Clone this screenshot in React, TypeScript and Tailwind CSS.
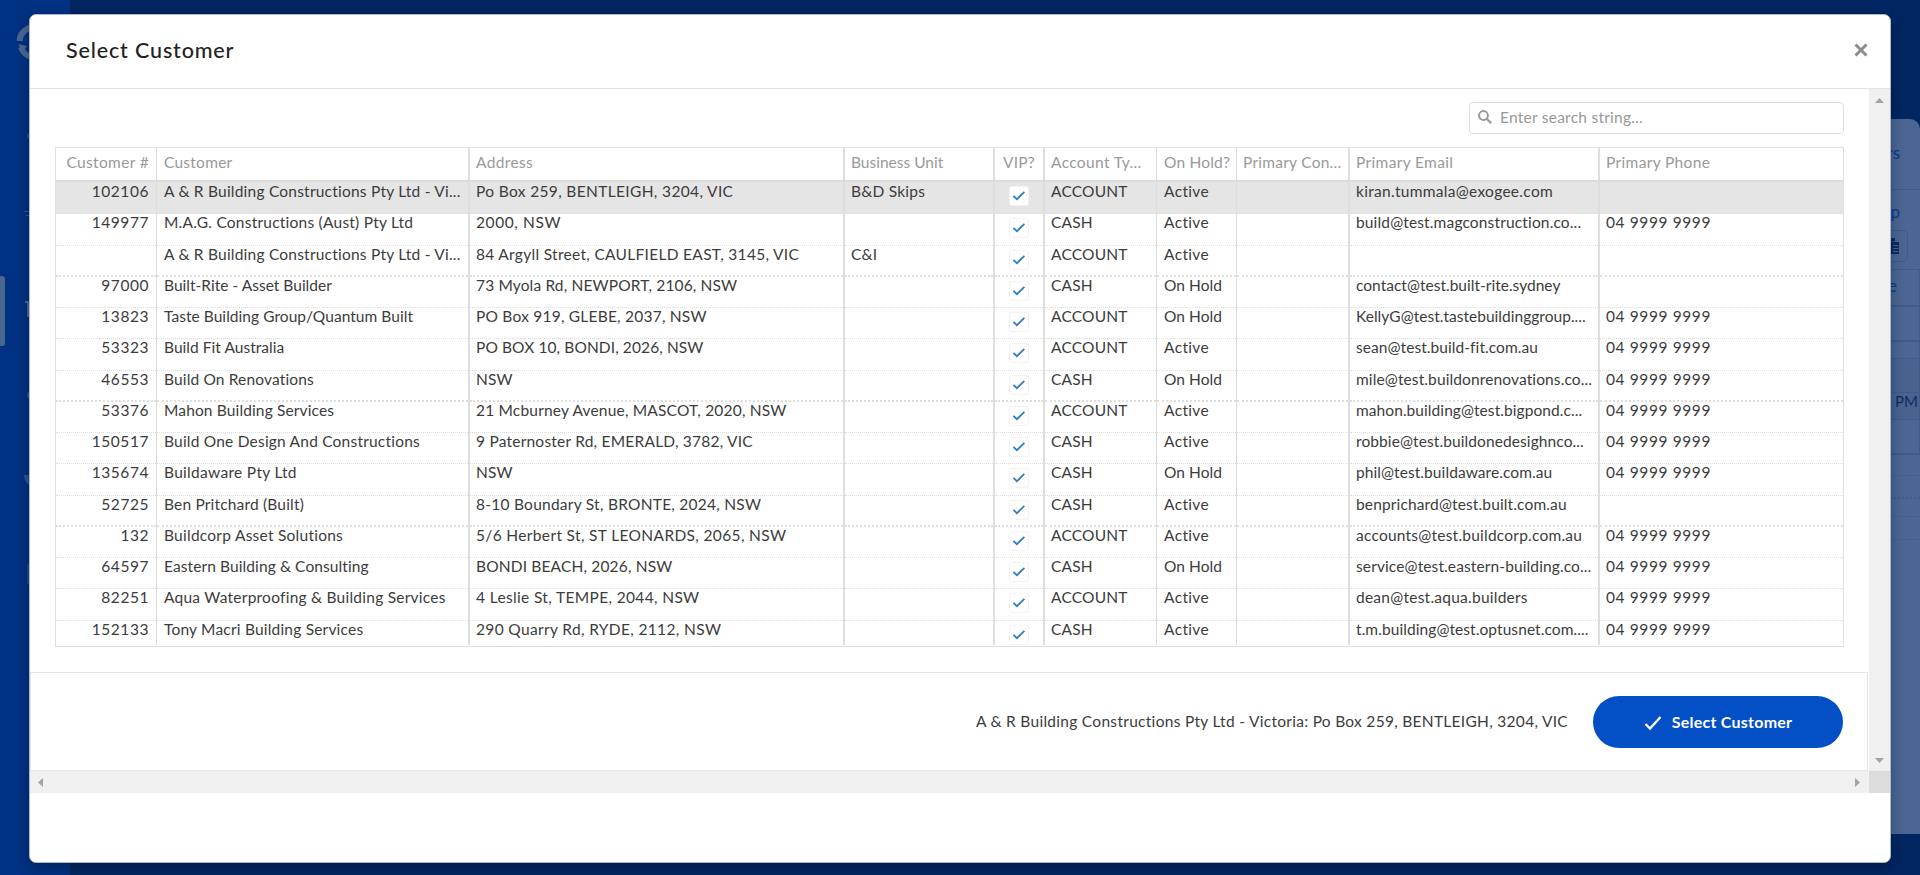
import React from "react";

type Row = {
  id: string;
  name: string;
  address: string;
  unit?: string;
  type: "ACCOUNT" | "CASH";
  hold: "Active" | "On Hold";
  email?: string;
  phone?: string;
  // letter spacing of the name, address and email cells
  spacing: [string, string, string];
};

const PHONE = "04 9999 9999";

const rows: Row[] = [
  { id: "102106", name: "A & R Building Constructions Pty Ltd - Vi...", address: "Po Box 259, BENTLEIGH, 3204, VIC", unit: "B&D Skips", type: "ACCOUNT", hold: "Active", email: "kiran.tummala@exogee.com", spacing: ["tracking-[0.22px]", "tracking-[0.35px]", "tracking-[0.3px]"] },
  { id: "149977", name: "M.A.G. Constructions (Aust) Pty Ltd", address: "2000, NSW", type: "CASH", hold: "Active", email: "build@test.magconstruction.co...", phone: PHONE, spacing: ["tracking-[0.23px]", "tracking-[0.6px]", "tracking-[0.15px]"] },
  { id: "", name: "A & R Building Constructions Pty Ltd - Vi...", address: "84 Argyll Street, CAULFIELD EAST, 3145, VIC", unit: "C&I", type: "ACCOUNT", hold: "Active", spacing: ["tracking-[0.22px]", "tracking-[0.3px]", "tracking-[0px]"] },
  { id: "97000", name: "Built-Rite - Asset Builder", address: "73 Myola Rd, NEWPORT, 2106, NSW", type: "CASH", hold: "On Hold", email: "contact@test.built-rite.sydney", spacing: ["tracking-[0.02px]", "tracking-[0.15px]", "tracking-[0.02px]"] },
  { id: "13823", name: "Taste Building Group/Quantum Built", address: "PO Box 919, GLEBE, 2037, NSW", type: "ACCOUNT", hold: "On Hold", email: "KellyG@test.tastebuildinggroup....", phone: PHONE, spacing: ["tracking-[0.05px]", "tracking-[0.22px]", "tracking-[0.03px]"] },
  { id: "53323", name: "Build Fit Australia", address: "PO BOX 10, BONDI, 2026, NSW", type: "ACCOUNT", hold: "Active", email: "sean@test.build-fit.com.au", phone: PHONE, spacing: ["tracking-[0.04px]", "tracking-[0.1px]", "tracking-[0.07px]"] },
  { id: "46553", name: "Build On Renovations", address: "NSW", type: "CASH", hold: "On Hold", email: "mile@test.buildonrenovations.co...", phone: PHONE, spacing: ["tracking-[0.15px]", "tracking-[0.1px]", "tracking-[0.12px]"] },
  { id: "53376", name: "Mahon Building Services", address: "21 Mcburney Avenue, MASCOT, 2020, NSW", type: "ACCOUNT", hold: "Active", email: "mahon.building@test.bigpond.c...", phone: PHONE, spacing: ["tracking-[0.14px]", "tracking-[0.19px]", "tracking-[0.07px]"] },
  { id: "150517", name: "Build One Design And Constructions", address: "9 Paternoster Rd, EMERALD, 3782, VIC", type: "CASH", hold: "Active", email: "robbie@test.buildonedesighnco...", phone: PHONE, spacing: ["tracking-[0.21px]", "tracking-[0.22px]", "tracking-[0.1px]"] },
  { id: "135674", name: "Buildaware Pty Ltd", address: "NSW", type: "CASH", hold: "On Hold", email: "phil@test.buildaware.com.au", phone: PHONE, spacing: ["tracking-[0.3px]", "tracking-[0.1px]", "tracking-[0.08px]"] },
  { id: "52725", name: "Ben Pritchard (Built)", address: "8-10 Boundary St, BRONTE, 2024, NSW", type: "CASH", hold: "Active", email: "benprichard@test.built.com.au", spacing: ["tracking-[0.18px]", "tracking-[0.25px]", "tracking-[0.14px]"] },
  { id: "132", name: "Buildcorp Asset Solutions", address: "5/6 Herbert St, ST LEONARDS, 2065, NSW", type: "ACCOUNT", hold: "Active", email: "accounts@test.buildcorp.com.au", phone: PHONE, spacing: ["tracking-[0.25px]", "tracking-[0.35px]", "tracking-[0.23px]"] },
  { id: "64597", name: "Eastern Building & Consulting", address: "BONDI BEACH, 2026, NSW", type: "CASH", hold: "On Hold", email: "service@test.eastern-building.co...", phone: PHONE, spacing: ["tracking-[0.1px]", "tracking-[0.16px]", "tracking-[0.12px]"] },
  { id: "82251", name: "Aqua Waterproofing & Building Services", address: "4 Leslie St, TEMPE, 2044, NSW", type: "ACCOUNT", hold: "Active", email: "dean@test.aqua.builders", phone: PHONE, spacing: ["tracking-[0.24px]", "tracking-[0.35px]", "tracking-[0.25px]"] },
  { id: "152133", name: "Tony Macri Building Services", address: "290 Quarry Rd, RYDE, 2112, NSW", type: "CASH", hold: "Active", email: "t.m.building@test.optusnet.com....", phone: PHONE, spacing: ["tracking-[0.2px]", "tracking-[0.35px]", "tracking-[0.08px]"] },
];

const GRID = "grid grid-cols-[101px_313px_375px_150px_50px_112px_80px_113px_250px_243px]";

const columns = [
  { label: "Customer #", border: "border-r", align: "justify-end pr-[7px]", head: "tracking-[0.35px]" },
  { label: "Customer", border: "border-r-2", align: "pl-[7px]", head: "tracking-[0.25px]" },
  { label: "Address", border: "border-r-2", align: "pl-[6px]", head: "tracking-[0.35px]" },
  { label: "Business Unit", border: "border-r-2", align: "pl-[6px]", head: "tracking-[0px]" },
  { label: "VIP?", border: "border-r-2", align: "justify-center", head: "tracking-[0.2px]" },
  { label: "Account Ty...", border: "border-r", align: "pl-[6px]", head: "tracking-[0.35px]" },
  { label: "On Hold?", border: "border-r", align: "pl-[7px]", head: "tracking-[0.2px]" },
  { label: "Primary Con...", border: "border-r-2", align: "pl-[6px]", head: "tracking-[0.25px]" },
  { label: "Primary Email", border: "border-r-2", align: "pl-[6px]", head: "tracking-[0.35px]" },
  { label: "Primary Phone", border: "", align: "pl-[6px]", head: "tracking-[0.35px]" },
];

function VipCheck() {
  return (
    <span className="mt-[4px] flex h-5 w-5 items-center justify-center rounded-[3px] border border-[#f3f3f3] bg-white">
      <svg width="14" height="12" viewBox="0 0 14 12" fill="none">
        <path d="M1.4 5.8 L4.9 9.2 L12.4 1.8" stroke="#2f7ac3" strokeWidth="1.7" />
      </svg>
    </span>
  );
}

function TableRow({ row, index }: { row: Row; index: number }) {
  const selected = index === 0;
  const strong = index % 4 === 2 && index < 12;
  const cells: [React.ReactNode, string][] = [
    [row.id, "tracking-[0.55px]"],
    [row.name, row.spacing[0]],
    [row.address, row.spacing[1]],
    [row.unit, "tracking-[0.22px]"],
    [<VipCheck key="vip" />, ""],
    [row.type, "tracking-[0.2px]"],
    [row.hold, row.hold === "Active" ? "tracking-[0.35px]" : "tracking-[0.05px]"],
    ["", ""],
    [row.email, row.spacing[2]],
    [row.phone, "tracking-[0.6px]"],
  ];
  return (
    <div className={`${GRID} shrink-0 ${selected ? "h-[32.25px] bg-[#e5e5e5] leading-[18px]" : "h-[31.25px] leading-[16px]"}`}>
      {cells.map(([value, spacing], i) => (
        <div key={i} className={`flex min-w-0 items-stretch border-[#dedede] ${columns[i].border}`}>
          <div
            className={`flex w-full items-start border-dotted border-[#dedede] whitespace-nowrap ${
              strong ? "border-b-2" : "border-b"
            } ${columns[i].align} ${spacing}`}
          >
            {value}
          </div>
        </div>
      ))}
    </div>
  );
}

function Backdrop() {
  return (
    <div className="flex h-[875px] w-[1920px] bg-[#002662]">
      <div className="relative w-[70px] bg-[#003182]">
        <svg className="absolute left-[16px] top-[24px]" width="36" height="36" viewBox="0 0 36 36" fill="none">
          <path d="M3.5 17 A15 15 0 0 1 18 3" stroke="#4b6794" strokeWidth="6" />
          <path d="M5 23 A14 14 0 0 0 18 33" stroke="#4b6794" strokeWidth="6" />
          <path d="M2 20 L11 22 L7 28 Z" fill="#4b6794" />
        </svg>
        <div className="absolute left-0 top-[276px] h-[70px] w-[5px] rounded-r-[3px] bg-[#4b6794]" />
        <div className="absolute left-[27px] top-[133px] h-[6px] w-5 rounded-l-full bg-[#2e5391]" />
        <div className="absolute left-[24px] top-[211px] h-px w-5 bg-[#2e5391]" />
        <div className="absolute left-[26px] top-[215px] h-px w-5 bg-[#2e5391]" />
        <div className="absolute left-[25px] top-[301px] h-[2px] w-5 bg-[#4b6794]" />
        <div className="absolute left-[27px] top-[302px] h-[15px] w-5 bg-[#4b6794]" />
        <div className="absolute left-[27px] top-[390px] h-[10px] w-5 rounded-full bg-[#2e5391]" />
        <div className="absolute left-[24px] top-[475px] h-[12px] w-5 rounded-bl-full bg-[#2e5391]" />
        <div className="absolute left-[27px] top-[563px] h-[22px] w-5 rounded-[3px] bg-[#1f488c]" />
      </div>
      <div className="relative mt-[119px] ml-5 h-[715px] w-[1830px] rounded-tr-[10px] bg-[#4b6692] text-[17px] text-[#063c96]">
        <div className="h-[71px] border-b border-[#3f5b8a] pt-[23px] pr-[20px] text-right leading-[22px]">Customers</div>
        <div className="h-[80px] border-b border-[#3f5b8a] pt-[11px] pr-[20px] text-right leading-[22px]">
          Map
          <div className="absolute top-[111px] right-[12px] flex h-8 w-10 items-center justify-end rounded-[5px] border border-[#3f5b8a] pr-[7px]">
            <svg width="16" height="16" viewBox="0 0 16 16">
              <path d="M0 0h11v3.5H8V12H0z" fill="#0b2d62" />
              <path d="M7 4h8v12H7z" fill="#0b2d62" />
              <path d="M9 7.5h5.5M9 10.5h5.5M9 13.5h5.5" stroke="#4b6692" strokeWidth="1" />
            </svg>
          </div>
        </div>
        <div className="border-r border-[#3f5b8a]">
          <div className="h-[37px] border-b-2 border-[#3f5b8a] pt-[5px] pr-[22px] text-right leading-[22px]">Date</div>
          <div className="h-[35px] border-b-2 border-[#3f5b8a]" />
          <div className="h-[17px] border-b border-[#3f5b8a]" />
          <div className="h-[34px] border-b border-[#3f5b8a] bg-[#49638f]" />
          <div className="h-[27px] border-b border-[#3f5b8a] bg-[#49638f] pr-[1px] text-right text-[15px] leading-[17px] text-[#0b2d62]">PM</div>
          <div className="h-[35px] border-b-2 border-[#3f5b8a]" />
        </div>
        <div className="h-[21px] border-b border-dotted border-[#3f5b8a]" />
        <div className="h-[23px] border-b-2 border-dotted border-[#3f5b8a]" />
        <div className="h-[18px] border-b border-dotted border-[#3f5b8a]" />
        <div className="h-[23px] border-b border-dotted border-[#3f5b8a]" />
      </div>
    </div>
  );
}

export default function App() {
  return (
    <div className="relative h-[875px] w-[1920px] overflow-hidden font-['Lato','Noto_Sans',sans-serif] text-[15.5px] text-[#3c3c3c]">
      <Backdrop />

      <div className="absolute top-[14px] left-[29px] flex h-[849px] w-[1862px] flex-col overflow-hidden rounded-[7px] border border-[#aeb8ca] bg-white shadow-[0_4px_14px_rgba(0,0,0,0.3)]">
        <header className="flex h-[74px] shrink-0 items-center justify-between border-b border-[#e2e2e2] pr-[22px] pl-[36px]">
          <h1 className="mb-[3px] text-[21.5px] font-medium tracking-[0.85px] text-[#222]">Select Customer</h1>
          <svg className="mb-[3px]" width="14" height="14" viewBox="0 0 14 14">
            <path d="M1.5 1.5 L12.5 12.5 M12.5 1.5 L1.5 12.5" stroke="#8c8c8c" strokeWidth="3" />
          </svg>
        </header>

        <div className="flex h-[682px] shrink-0">
          <div className="flex w-[1839px] flex-col">
            <div className="flex h-[583px] flex-col pt-[13px] pr-[25px] pl-[25px]">
              <div className="mb-[13px] flex h-8 w-[375px] shrink-0 items-center gap-[8px] self-end rounded-[4px] border border-[#dedede] pb-[1px] pl-[8px] tracking-[0.25px] text-[#999]">
                <svg className="mt-[-2px]" width="14" height="14" viewBox="0 0 14 14" fill="none">
                  <circle cx="5.5" cy="5.5" r="4.4" stroke="#999" strokeWidth="2" />
                  <path d="M8.7 8.7 L13.2 13.2" stroke="#999" strokeWidth="2.2" />
                </svg>
                Enter search string...
              </div>

              <div className="flex h-[500px] w-[1789px] shrink-0 flex-col overflow-hidden border border-[#e0e0e0]">
                <div className={`${GRID} h-[34px] shrink-0 border-b-2 border-[#dcdcdc] text-[#999]`}>
                  {columns.map((c) => (
                    <div key={c.label} className={`flex min-w-0 items-center border-[#dedede] pb-[2px] whitespace-nowrap ${c.border} ${c.align} ${c.head}`}>
                      {c.label}
                    </div>
                  ))}
                </div>
                <div className="flex h-[463px] flex-col overflow-hidden">
                  {rows.map((row, i) => (
                    <TableRow key={i} row={row} index={i} />
                  ))}
                </div>
              </div>
            </div>

            <footer className="flex h-[99px] w-[1838px] items-center justify-end gap-[25px] border border-[#e6e6e6] pr-[24px]">
              <span className="tracking-[0.29px]">A &amp; R Building Constructions Pty Ltd - Victoria: Po Box 259, BENTLEIGH, 3204, VIC</span>
              <button className="flex h-[52px] w-[250px] items-center justify-center gap-[10px] rounded-full bg-[#0350c6] text-[16px] font-bold tracking-[0.25px] text-white">
                <svg className="mt-[2px]" width="18" height="16" viewBox="0 0 18 16" fill="none">
                  <path d="M1.5 9 L6 13.5 L16.5 2" stroke="white" strokeWidth="2.3" />
                </svg>
                Select Customer
              </button>
            </footer>
          </div>

          <div className="flex w-[21px] flex-col items-center justify-between bg-[#f0f0f0] pt-[9px] pb-[8px]">
            <svg width="9" height="5" viewBox="0 0 9 5"><path d="M0 5 L4.5 0 L9 5 Z" fill="#a3a3a3" /></svg>
            <svg width="9" height="5" viewBox="0 0 9 5"><path d="M0 0 L4.5 5 L9 0 Z" fill="#a3a3a3" /></svg>
          </div>
        </div>

        <div className="flex h-[22px] shrink-0">
          <div className="flex w-[1839px] items-center justify-between bg-[#f0f0f0] pr-[9px] pl-[8px]">
            <svg width="5" height="9" viewBox="0 0 5 9"><path d="M5 0 L0 4.5 L5 9 Z" fill="#a3a3a3" /></svg>
            <svg width="5" height="9" viewBox="0 0 5 9"><path d="M0 0 L5 4.5 L0 9 Z" fill="#a3a3a3" /></svg>
          </div>
          <div className="w-[21px] bg-[#dcdcdc]" />
        </div>
      </div>
    </div>
  );
}
